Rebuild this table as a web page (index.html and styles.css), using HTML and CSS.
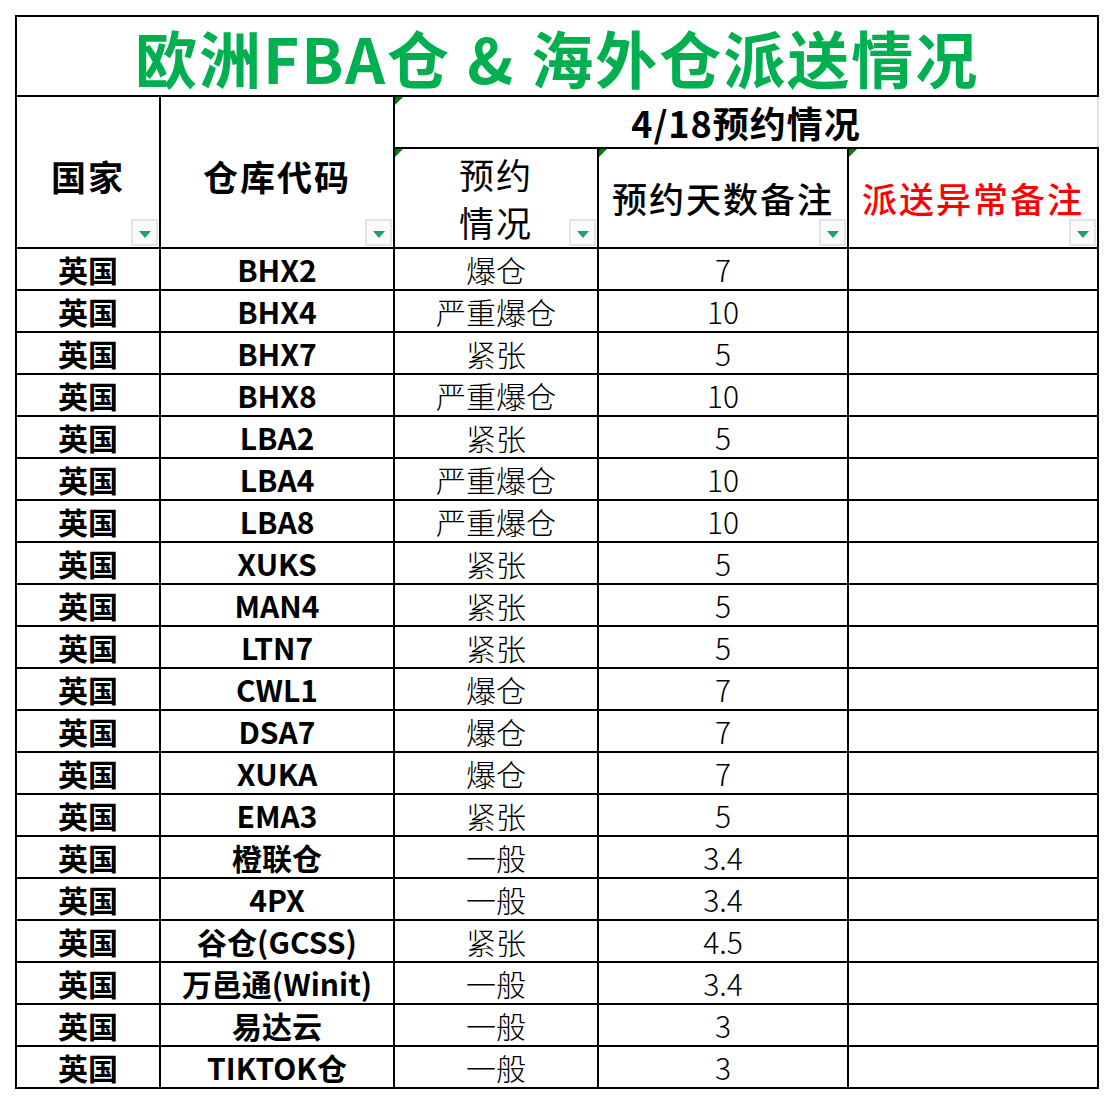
FILE: index.html
```html
<!DOCTYPE html>
<html lang="zh-CN">
<head>
<meta charset="utf-8">
<title>欧洲FBA仓 &amp; 海外仓派送情况</title>
<link rel="stylesheet" href="styles.css">
</head>
<body>
<table class="sheet">
  <colgroup>
    <col class="c1"><col class="c2"><col class="c3"><col class="c4"><col class="c5">
  </colgroup>
  <tr class="r-title">
    <td colspan="5" class="title">欧洲FBA仓 &amp; 海外仓派送情况</td>
  </tr>
  <tr class="r-h1">
    <td rowspan="2" class="hd bold"><span class="sp">国家</span><span class="flt"></span></td>
    <td rowspan="2" class="hd bold"><span class="sp">仓库代码</span><span class="flt"></span></td>
    <td colspan="3" class="date"><span class="tri"></span>4/18预约情况</td>
  </tr>
  <tr class="r-h2">
    <td class="hd two"><span class="tri"></span>预约<br>情况<span class="flt"></span></td>
    <td class="hd wide"><span class="tri"></span>预约天数备注<span class="flt"></span></td>
    <td class="hd wide red"><span class="tri"></span>派送异常备注<span class="flt"></span></td>
  </tr>
  <tr><td class="cn">英国</td><td class="code">BHX2</td><td class="st">爆仓</td><td class="num">7</td><td></td></tr>
  <tr><td class="cn">英国</td><td class="code">BHX4</td><td class="st">严重爆仓</td><td class="num">10</td><td></td></tr>
  <tr><td class="cn">英国</td><td class="code">BHX7</td><td class="st">紧张</td><td class="num">5</td><td></td></tr>
  <tr><td class="cn">英国</td><td class="code">BHX8</td><td class="st">严重爆仓</td><td class="num">10</td><td></td></tr>
  <tr><td class="cn">英国</td><td class="code">LBA2</td><td class="st">紧张</td><td class="num">5</td><td></td></tr>
  <tr><td class="cn">英国</td><td class="code">LBA4</td><td class="st">严重爆仓</td><td class="num">10</td><td></td></tr>
  <tr><td class="cn">英国</td><td class="code">LBA8</td><td class="st">严重爆仓</td><td class="num">10</td><td></td></tr>
  <tr><td class="cn">英国</td><td class="code">XUKS</td><td class="st">紧张</td><td class="num">5</td><td></td></tr>
  <tr><td class="cn">英国</td><td class="code">MAN4</td><td class="st">紧张</td><td class="num">5</td><td></td></tr>
  <tr><td class="cn">英国</td><td class="code">LTN7</td><td class="st">紧张</td><td class="num">5</td><td></td></tr>
  <tr><td class="cn">英国</td><td class="code">CWL1</td><td class="st">爆仓</td><td class="num">7</td><td></td></tr>
  <tr><td class="cn">英国</td><td class="code">DSA7</td><td class="st">爆仓</td><td class="num">7</td><td></td></tr>
  <tr><td class="cn">英国</td><td class="code">XUKA</td><td class="st">爆仓</td><td class="num">7</td><td></td></tr>
  <tr><td class="cn">英国</td><td class="code">EMA3</td><td class="st">紧张</td><td class="num">5</td><td></td></tr>
  <tr><td class="cn">英国</td><td class="code">橙联仓</td><td class="st">一般</td><td class="num">3.4</td><td></td></tr>
  <tr><td class="cn">英国</td><td class="code">4PX</td><td class="st">一般</td><td class="num">3.4</td><td></td></tr>
  <tr><td class="cn">英国</td><td class="code">谷仓(GCSS)</td><td class="st">紧张</td><td class="num">4.5</td><td></td></tr>
  <tr><td class="cn">英国</td><td class="code">万邑通(Winit)</td><td class="st">一般</td><td class="num">3.4</td><td></td></tr>
  <tr><td class="cn">英国</td><td class="code">易达云</td><td class="st">一般</td><td class="num">3</td><td></td></tr>
  <tr><td class="cn">英国</td><td class="code">TIKTOK仓</td><td class="st">一般</td><td class="num">3</td><td></td></tr>
</table>
</body>
</html>
```

FILE: styles.css
```css
html, body {
  margin: 0;
  padding: 0;
  background: #fff;
}
body {
  font-family: "Noto Sans CJK SC", "Noto Sans", sans-serif;
  color: #000;
}
.sheet {
  border-collapse: collapse;
  table-layout: fixed;
  margin: 15px 0 0 15px;
  width: 1084px;
}
.c1 { width: 144px; }
.c2 { width: 234px; }
.c3 { width: 204px; }
.c4 { width: 250px; }
.c5 { width: 250px; }
.sheet td {
  border: 2px solid #000;
  padding: 0;
  text-align: center;
  vertical-align: middle;
  white-space: nowrap;
  position: relative;
}
.sheet tr { height: 42px; }
.sheet tr.r-title { height: 80px; }
.sheet tr.r-h1 { height: 52px; }
.sheet tr.r-h2 { height: 100px; }
.title {
  color: #00b050;
  font-size: 62px;
  font-weight: 700;
  line-height: 1;
  letter-spacing: 2px;
  padding-top: 2px !important;
}
.date {
  font-size: 36px;
  font-weight: 700;
  border-right-color: #e2e2e2 !important;
  line-height: 1;
  letter-spacing: 1px;
}
.hd {
  font-size: 35px;
  line-height: 48px;
}
.hd.bold {
  font-weight: 700;
}
.hd.bold .sp { letter-spacing: 2px; position: relative; top: 4px; }
.hd.two { font-weight: 400; letter-spacing: 2px; }
.hd.wide { font-weight: 500; letter-spacing: 2px; }
.hd.red { color: #ff0000; }
.cn {
  font-size: 30px;
  font-weight: 700;
  line-height: 1;
}
.code {
  font-size: 30px;
  font-weight: 700;
  line-height: 1;
}
.st {
  font-size: 30px;
  font-weight: 300;
  line-height: 1;
}
.num {
  font-size: 30px;
  font-weight: 300;
  line-height: 1;
}
.flt {
  position: absolute;
  right: 1px;
  bottom: 1px;
  width: 27px;
  height: 27px;
  box-sizing: border-box;
  border: 2px solid #e4e4e4;
  background: #fbfbfb;
}
.flt::after {
  content: "";
  position: absolute;
  left: 6px;
  top: 10px;
  border-left: 6px solid transparent;
  border-right: 6px solid transparent;
  border-top: 7px solid #1f9e6e;
}
.tri {
  position: absolute;
  left: 0;
  top: 0;
  width: 0;
  height: 0;
  border-top: 8px solid #008000;
  border-right: 8px solid transparent;
}
```
